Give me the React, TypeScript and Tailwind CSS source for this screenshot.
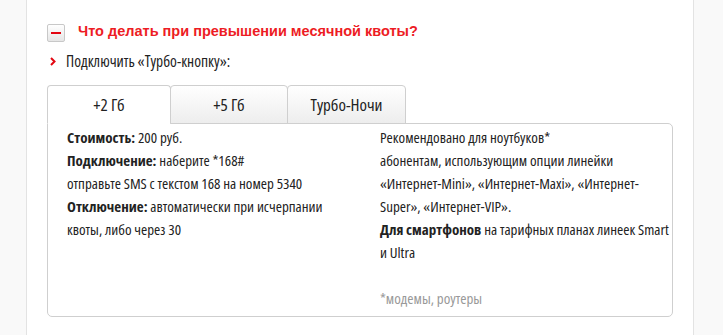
import React, { useState } from "react";

// condensed Open Sans is the closest installed match to the site's narrow font
const narrow = "font-['Open_Sans',sans-serif] font-stretch-[75%]";

const tabs = [
  { label: "+2 Гб", w: "w-[124px]" },
  { label: "+5 Гб", w: "w-[118px]" },
  { label: "Турбо-Ночи", w: "w-[119px]" },
];

export default function App() {
  const [active, setActive] = useState(0);

  return (
    <div className="min-h-screen bg-[#f9f9f9]">
      <div className="ml-[26px] min-h-[335px] w-[668px] border-x border-[#e3e3e3] bg-white pl-[20px] pt-[22px] text-[#222]">
        {/* header */}
        <div className="flex items-start">
          <button className="mt-[2px] flex h-[18px] w-[18px] items-center justify-center rounded-[2px] border border-[#c8c8c8] bg-gradient-to-b from-white to-[#e6e6e6]">
            <span className="block h-[2px] w-[10px] bg-[#e30611]" />
          </button>
          <h2 className="ml-[13px] font-['Liberation_Sans',Arial,sans-serif] text-[14.5px] font-bold leading-[18px] text-[#ed1c24]">
            Что делать при превышении месячной квоты?
          </h2>
        </div>

        <div className={`mt-[9px] flex items-center ${narrow} text-[15.5px] leading-[20px]`}>
          <svg width="6" height="9" viewBox="0 0 6 9" className="ml-[3px]">
            <path d="M1 1 L4.5 4.5 L1 8" fill="none" stroke="#e30611" strokeWidth="2" />
          </svg>
          <span className="ml-[10px]">Подключить «Турбо-кнопку»:</span>
        </div>

        {/* tabs */}
        <div className={`mt-[14px] w-[626px] ${narrow}`}>
          <div className="relative z-10 flex">
            {tabs.map((t, i) => (
              <button
                key={t.label}
                onClick={() => setActive(i)}
                className={[
                  "h-[39px] -mr-px rounded-t-[4px] border border-[#cfcfcf] text-[17px] font-medium text-[#222]",
                  t.w,
                  active === i
                    ? "border-b-white bg-white"
                    : "bg-gradient-to-b from-white to-[#ededed]",
                ].join(" ")}
              >
                {t.label}
              </button>
            ))}
          </div>

          <div className="-mt-px flex rounded-b-[5px] rounded-tr-[5px] border border-[#cfcfcf] pb-[6px] pl-[19px] pt-[2px] text-[15px] leading-[23px] whitespace-nowrap">
            <div className="w-[313px]">
              <p>
                <b className="font-bold">Стоимость:</b> 200 руб.
              </p>
              <p>
                <b className="font-bold">Подключение:</b> наберите *168#
              </p>
              <p>отправьте SMS с текстом 168 на номер 5340</p>
              <p>
                <b className="font-bold">Отключение:</b> автоматически при исчерпании
                <br />
                квоты, либо через 30
              </p>
            </div>
            <div className="w-[292px]">
              <p>Рекомендовано для ноутбуков*</p>
              <p>
                абонентам, использующим опции линейки
                <br />
                «Интернет-Mini», «Интернет-Maxi», «Интернет-
                <br />
                Super», «Интернет-VIP».
              </p>
              <p>
                <b className="font-bold">Для смартфонов</b> на тарифных планах линеек Smart
                <br />и Ultra
              </p>
              <p className="mt-[23px] text-[#999]">*модемы, роутеры</p>
            </div>
          </div>
        </div>
      </div>
    </div>
  );
}
